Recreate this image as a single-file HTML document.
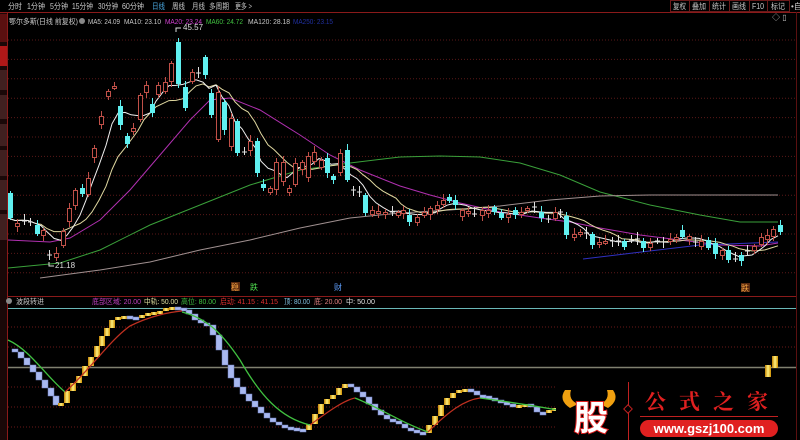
<!DOCTYPE html>
<html><head><meta charset="utf-8"><style>
html,body{margin:0;padding:0;background:#000;width:800px;height:440px;overflow:hidden;font-family:"Liberation Sans","Noto Sans CJK SC",sans-serif}
svg{position:absolute;left:0;top:0}
</style></head><body>
<svg id="s" width="800" height="440" viewBox="0 0 800 440" xmlns="http://www.w3.org/2000/svg" font-family="Liberation Sans, Noto Sans CJK SC, sans-serif">
<rect width="800" height="440" fill="#000"/>
<g font-size="8" fill="#c8c8c8" lengthAdjust="spacingAndGlyphs">
<text x="8" y="9" textLength="14" lengthAdjust="spacingAndGlyphs">分时</text><text x="27" y="9" textLength="18" lengthAdjust="spacingAndGlyphs">1分钟</text><text x="50" y="9" textLength="18" lengthAdjust="spacingAndGlyphs">5分钟</text><text x="72" y="9" textLength="21" lengthAdjust="spacingAndGlyphs">15分钟</text><text x="98" y="9" textLength="20" lengthAdjust="spacingAndGlyphs">30分钟</text><text x="122" y="9" textLength="22" lengthAdjust="spacingAndGlyphs">60分钟</text><text x="152" y="9" fill="#4aa8e0" textLength="13" lengthAdjust="spacingAndGlyphs">日线</text><text x="172" y="9" textLength="13" lengthAdjust="spacingAndGlyphs">周线</text><text x="192" y="9" textLength="13" lengthAdjust="spacingAndGlyphs">月线</text><text x="209" y="9" textLength="20" lengthAdjust="spacingAndGlyphs">多周期</text><text x="235" y="9" textLength="17" lengthAdjust="spacingAndGlyphs">更多 &gt;</text>
</g>
<g stroke="#6a1a1a" fill="none"><rect x="670.5" y="0.5" width="19" height="11"/><rect x="689.5" y="0.5" width="20" height="11"/><rect x="709.5" y="0.5" width="20" height="11"/><rect x="729.5" y="0.5" width="20" height="11"/><rect x="749.5" y="0.5" width="18" height="11"/><rect x="767.5" y="0.5" width="22" height="11"/></g>
<g font-size="8" fill="#c8c8c8"><text x="673" y="9" textLength="13" lengthAdjust="spacingAndGlyphs">复权</text><text x="692" y="9" textLength="14" lengthAdjust="spacingAndGlyphs">叠加</text><text x="712" y="9" textLength="14" lengthAdjust="spacingAndGlyphs">统计</text><text x="732" y="9" textLength="14" lengthAdjust="spacingAndGlyphs">画线</text><text x="752" y="9" textLength="12" lengthAdjust="spacingAndGlyphs">F10</text><text x="771" y="9" textLength="14" lengthAdjust="spacingAndGlyphs">标记</text><text x="791" y="9">•自</text></g>
<line x1="0" y1="12.5" x2="800" y2="12.5" stroke="#8a1a1a"/>
<rect x="0" y="13" width="7" height="427" fill="#1a0808"/>
<rect x="0" y="14" width="7" height="28" fill="#5a1010"/><rect x="0" y="46" width="7" height="20" fill="#b01818"/>
<g fill="#402020"><rect x="0" y="70" width="7" height="20"/><rect x="0" y="95" width="7" height="24"/><rect x="0" y="124" width="7" height="22"/><rect x="0" y="150" width="7" height="26"/><rect x="0" y="180" width="7" height="30"/><rect x="0" y="214" width="7" height="26"/></g>
<line x1="7.5" y1="12" x2="7.5" y2="440" stroke="#8a1a1a"/>
<line x1="796.5" y1="12" x2="796.5" y2="440" stroke="#5a1010"/>
<g id="grid"></g>
<g font-size="7.5" fill="#c8c8c8">
<text x="9" y="24" textLength="69" lengthAdjust="spacingAndGlyphs">鄂尔多斯(日线 前复权)</text>
<circle cx="82" cy="21" r="3" fill="#888"/>
<text x="88" y="24" textLength="32" lengthAdjust="spacingAndGlyphs">MA5: 24.09</text><text x="124" y="24" textLength="37" lengthAdjust="spacingAndGlyphs">MA10: 23.10</text>
<text x="165" y="24" fill="#d040d0" textLength="37" lengthAdjust="spacingAndGlyphs">MA20: 23.24</text><text x="206" y="24" fill="#40c040" textLength="37" lengthAdjust="spacingAndGlyphs">MA60: 24.72</text>
<text x="248" y="24" textLength="42" lengthAdjust="spacingAndGlyphs">MA120: 28.18</text><text x="293" y="24" fill="#2030a0" textLength="40" lengthAdjust="spacingAndGlyphs">MA250: 23.15</text>
</g>
<text x="772" y="20" font-size="8" fill="#bbb">◇ ▯</text>
<g id="ma" fill="none" stroke-width="1"></g>
<g id="cd"></g>
<g font-size="8" fill="#ddd"><text x="183" y="30">45.57</text><path d="M176 32 V28 H181" stroke="#ddd" fill="none"/><text x="55" y="268">21.18</text><path d="M49 262 V266 H54" stroke="#ddd" fill="none"/></g>
<g font-size="8"><rect x="231" y="282" width="9" height="9" fill="#5a2a10"/><text x="231" y="290" fill="#f0a040">稳</text><text x="250" y="290" fill="#50e050">跌</text><text x="334" y="290" fill="#60a0ff">财</text><rect x="741" y="283" width="9" height="9" fill="#5a2a10"/><text x="741" y="291" fill="#f0a040">跌</text></g>
<line x1="8" y1="296.5" x2="796" y2="296.5" stroke="#8a1a1a"/>
<g font-size="7.5"><circle cx="9" cy="301" r="3" fill="#888"/><text x="16" y="304" fill="#c8c8c8" textLength="28" lengthAdjust="spacingAndGlyphs">波段转进</text>
<text x="92" y="304" fill="#c040c0" textLength="49" lengthAdjust="spacingAndGlyphs">底部区域: 20.00</text><text x="144" y="304" fill="#e0e0a0" textLength="34" lengthAdjust="spacingAndGlyphs">中轨: 50.00</text><text x="181" y="304" fill="#40c040" textLength="35" lengthAdjust="spacingAndGlyphs">高位: 80.00</text><text x="220" y="304" fill="#e03030" textLength="58" lengthAdjust="spacingAndGlyphs">启动: 41.15 : 41.15</text><text x="284" y="304" fill="#80c0e0" textLength="26" lengthAdjust="spacingAndGlyphs">顶: 80.00</text><text x="314" y="304" fill="#e08080" textLength="28" lengthAdjust="spacingAndGlyphs">底: 20.00</text><text x="346" y="304" fill="#e0e0e0" textLength="29" lengthAdjust="spacingAndGlyphs">中: 50.00</text></g>
<line x1="8" y1="308.5" x2="796" y2="308.5" stroke="#6ab8b8"/>
<line x1="8" y1="367.5" x2="796" y2="367.5" stroke="#808070" stroke-width="1.5"/>
<defs><linearGradient id="gy" x1="0" x2="1"><stop offset="0" stop-color="#c08000"/><stop offset=".5" stop-color="#fff080"/><stop offset="1" stop-color="#d09000"/></linearGradient></defs>
<g id="ind"></g>
<g fill="none" stroke-width="1.3">
<path d="M8 340 C30 350 45 375 65 392" stroke="#40c040"/>
<path d="M65 392 C90 370 110 340 130 326 C150 316 170 312 182 311" stroke="#c03020"/>
<path d="M182 312 C205 318 220 330 240 360 C260 395 280 418 310 425" stroke="#40c040"/>
<path d="M310 425 C330 410 345 400 355 398" stroke="#c03020"/>
<path d="M355 398 C380 408 400 422 428 432" stroke="#40c040"/>
<path d="M428 432 C450 410 465 400 480 398" stroke="#c03020"/>
<path d="M480 398 C510 402 535 406 558 410" stroke="#40c040"/>
</g>
<rect x="556" y="380" width="240" height="60" fill="#000"/>
<path d="M565 390 Q558 400 570 408 L578 404 Q568 400 571 390Z" fill="#f0a010"/>
<path d="M613 390 Q620 400 608 408 L600 404 Q610 400 607 390Z" fill="#f0a010"/>
<text x="574" y="430" font-size="34" font-weight="bold" fill="#fff" stroke="#e02020" stroke-width="2" paint-order="stroke" font-family="Noto Sans CJK SC, sans-serif">股</text>
<line x1="628.5" y1="382" x2="628.5" y2="440" stroke="#c02020"/>
<rect x="625" y="406" width="6" height="6" transform="rotate(45 628 409)" fill="#000" stroke="#c02020"/>
<text x="645" y="409" font-size="21" font-weight="bold" fill="#e02020" letter-spacing="13" font-family="Noto Serif CJK SC, serif">公式之家</text>
<line x1="640" y1="416.5" x2="778" y2="416.5" stroke="#c02020"/>
<rect x="640" y="420" width="138" height="17" rx="8.5" fill="#e02020"/>
<text x="709" y="433" font-size="13" font-weight="bold" fill="#fff" text-anchor="middle">www.gszj100.com</text>
</svg>
<script>
var S='http://www.w3.org/2000/svg';
function el(p,t,a){var e=document.createElementNS(S,t);for(var k in a)e.setAttribute(k,a[k]);document.getElementById(p).appendChild(e);return e;}
for(var y=40;y<280;y+=19.4)el('grid','line',{x1:8,x2:796,y1:y,y2:y,stroke:'#5a1818','stroke-dasharray':'1 2'});
[327,347,387,407,427].forEach(function(y){el('grid','line',{x1:8,x2:796,y1:y,y2:y,stroke:'#6a1818','stroke-dasharray':'1 2'})});
var C=[[8,193,218,'c'],[15,223,227,'r'],[22,220,221,'x'],[28,221,223,'x'],[35,225,234,'c'],[41,230,236,'r'],[47,254,256,'x'],[54,253,258,'r'],[61,231,246,'r'],[67,208,222,'r'],[73,190,206,'r'],[80,188,194,'c'],[86,178,195,'r'],[92,148,158,'r'],[99,116,125,'r'],[106,91,97,'r'],[112,86,88,'r'],[118,106,125,'c'],[125,136,144,'c'],[131,128,132,'r'],[138,95,120,'r'],[144,85,93,'r'],[150,104,113,'c'],[156,85,95,'r'],[163,82,92,'r'],[169,63,82,'r'],[176,42,84,'c'],[183,87,108,'c'],[190,72,82,'r'],[196,72,73,'x'],[203,57,75,'c'],[209,93,115,'c'],[216,92,140,'r'],[222,102,130,'c'],[229,118,147,'r'],[235,121,153,'c'],[242,151,153,'x'],[248,141,151,'r'],[255,141,173,'c'],[261,184,188,'c'],[268,188,193,'r'],[274,162,190,'r'],[281,162,182,'r'],[287,188,193,'r'],[293,163,185,'r'],[300,162,170,'r'],[306,156,178,'r'],[312,152,162,'r'],[319,160,168,'r'],[325,158,173,'c'],[331,176,180,'c'],[338,153,173,'r'],[345,150,180,'c'],[351,189,191,'x'],[357,191,193,'x'],[363,195,213,'c'],[370,210,215,'r'],[376,211,213,'r'],[383,212,215,'r'],[390,211,213,'x'],[396,212,216,'r'],[401,210,214,'r'],[407,215,222,'c'],[415,217,223,'r'],[422,212,216,'r'],[428,208,215,'r'],[435,205,210,'r'],[441,200,205,'r'],[447,197,201,'c'],[453,200,205,'c'],[460,210,217,'r'],[466,211,214,'r'],[472,213,215,'x'],[480,210,216,'r'],[486,210,214,'r'],[492,207,212,'c'],[499,213,218,'c'],[506,214,218,'r'],[513,210,215,'c'],[519,212,215,'r'],[525,208,211,'r'],[532,206,208,'x'],[539,212,218,'c'],[546,218,220,'x'],[553,212,219,'r'],[558,211,213,'x'],[564,216,235,'c'],[572,234,238,'r'],[578,232,235,'r'],[584,232,234,'x'],[590,234,245,'c'],[597,242,245,'r'],[603,241,243,'r'],[610,240,242,'x'],[616,240,242,'x'],[622,241,247,'c'],[629,239,241,'x'],[635,238,240,'x'],[641,241,248,'c'],[648,243,248,'r'],[655,240,242,'x'],[661,241,243,'x'],[668,239,241,'r'],[674,237,240,'r'],[680,230,237,'c'],[687,236,240,'r'],[693,241,243,'x'],[699,241,247,'r'],[706,240,248,'c'],[713,243,254,'c'],[720,250,256,'r'],[726,250,260,'c'],[733,258,260,'x'],[739,255,261,'c'],[745,250,252,'x'],[752,246,251,'r'],[759,237,245,'r'],[765,235,240,'r'],[771,229,237,'r'],[778,225,232,'c']];
var cl=C.map(function(c){return c[3]=='c'?c[2]:c[1]});
function ma(n){var p=[];for(var i=0;i<C.length;i++){var a=Math.max(0,i-n+1),s=0;for(var j=a;j<=i;j++)s+=cl[j];p.push(C[i][0]+','+(s/(i-a+1)).toFixed(1));}return p.join(' ');}
el('ma','polyline',{points:'8,268 60,263 100,250 150,225 200,205 250,185 300,170 350,163 400,157 440,156 480,157 520,163 560,175 600,192 650,205 700,215 740,222 778,222',stroke:'#3aa03a'});
el('ma','polyline',{points:'40,278 100,270 150,262 200,250 250,240 300,228 350,218 400,213 450,210 500,206 550,200 600,196 650,195 700,195 778,195',stroke:'#a09090'});
el('ma','polyline',{points:'8,240 50,242 70,238 100,220 130,190 160,155 190,120 210,100 230,98 260,110 300,135 330,155 360,170 400,186 430,195 460,203 500,212 540,218 570,222 600,228 640,235 680,240 720,245 760,246 778,243',stroke:'#b030b0'});
el('ma','polyline',{points:'583,259 700,245 778,242',stroke:'#3030c0'});
el('ma','polyline',{points:ma(10),stroke:'#e0d8a0'});
el('ma','polyline',{points:ma(5),stroke:'#f0f0f0'});
C.forEach(function(c,i){var x=c[0],t=c[1],b=c[2],h=Math.max(3,b-t);var hi=t-2-(i*7%5),lo=b+2+(i*3%4);
 var col=c[3]=='c'?'#60f0f0':(c[3]=='x'?'#e0e0e0':'#c05048');
 el('cd','line',{x1:x+2.5,x2:x+2.5,y1:hi,y2:lo,stroke:col});
 if(c[3]=='x')el('cd','line',{x1:x,x2:x+5,y1:t+1,y2:t+1,stroke:col});
 else if(c[3]=='c')el('cd','rect',{x:x,y:t,width:5,height:h,fill:col});
 else el('cd','rect',{x:x+.5,y:t+.5,width:4,height:h-1,fill:'#000',stroke:col});
});
var P=[[8,349],[14,352],[20,358],[26,365],[32,372],[38,380],[44,388],[50,396],[55,405],[60,403],[66,391],[72,383],[78,376],[84,366],[90,357],[96,346],[101,336],[106,328],[111,320],[117,317],[123,316],[129,317],[135,318],[141,315],[147,313],[153,312],[159,311],[165,308],[171,307],[177,308],[183,310],[188,314],[194,320],[200,323],[206,325],[212,335],[218,350],[224,365],[230,378],[236,387],[242,394],[248,401],[254,407],[260,413],[266,418],[272,422],[278,425],[284,427],[290,428],[296,429],[302,430],[308,424],[314,414],[320,404],[326,399],[332,395],[338,388],[344,384],[350,387],[356,392],[362,397],[368,404],[374,410],[380,415],[386,419],[392,421],[398,424],[404,428],[410,430],[416,432],[422,433],[428,425],[434,416],[440,405],[446,398],[452,393],[458,390],[464,389],[470,391],[476,395],[482,396],[488,398],[494,400],[500,402],[506,404],[512,407],[518,405],[524,404],[530,407],[536,412],[542,413],[548,410],[554,408]];
for(var i=1;i<P.length;i++){var a=P[i-1][1],b=P[i][1],up=b<a;var y=Math.min(a,b),h=Math.max(3,Math.abs(b-a));
 el('ind','rect',{x:P[i][0]-2,y:y,width:6,height:h,fill:up?'url(#gy)':'#a8b8f0',stroke:up?'none':'#7080c0','stroke-width':.5});}
el('ind','rect',{x:765,y:365,width:6,height:12,fill:'url(#gy)'});
el('ind','rect',{x:772,y:356,width:6,height:12,fill:'url(#gy)'});
</script>
</body></html>
